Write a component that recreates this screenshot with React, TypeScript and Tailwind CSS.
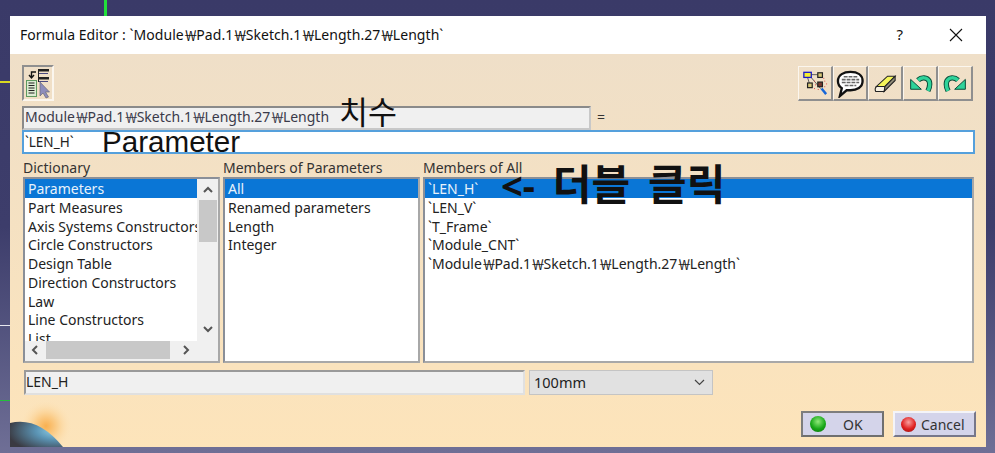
import React from "react";

const font = { fontFamily: '"Noto Sans","Noto Sans CJK KR",sans-serif' };

const dict = ["Parameters","Part Measures","Axis Systems Constructors","Circle Constructors","Design Table","Direction Constructors","Law","Line Constructors","List"];
const mem = ["All","Renamed parameters","Length","Integer"];
const all = ["`LEN_H`","`LEN_V`","`T_Frame`","`Module_CNT`"];

function W() {
  return <span className="tracking-[-1.5px]" style={{ fontFamily: '"Noto Sans CJK KR",sans-serif' }}>￦</span>;
}

function Path() {
  return <>Module<W />Pad.1<W />Sketch.1<W />Length.27<W />Length</>;
}

function Rows({ items, extra }: { items: string[]; extra?: React.ReactNode }) {
  return (
    <div className="flex flex-col">
      {items.map((t, i) => (
        <div key={t} className={`h-[18.75px] leading-[19px] pl-[3px] whitespace-nowrap ${i === 0 ? "bg-[#0a76d6] text-[#e8f2fb]" : "text-[#222]"}`}>{t}</div>
      ))}
      {extra}
    </div>
  );
}

function TB({ children }: { children: React.ReactNode }) {
  return (
    <div className="w-[35px] h-[35px] flex items-center justify-center border border-t-[#fbf6ee] border-l-[#fbf6ee] border-r-[#8f8f8f] border-b-[#8f8f8f] border-r-2 border-b-2">
      {children}
    </div>
  );
}

function Turn({ flip }: { flip?: boolean }) {
  return (
    <svg width="25" height="23" viewBox="0 0 30 28" fill="none" style={flip ? { transform: "scaleX(-1)" } : undefined}>
      <path d="M12 10C16 6 23 6 25.5 11C27 15 26 19 24 23" stroke="#0a4a38" strokeWidth="6.5" />
      <path d="M12 10C16 6 23 6 25.5 11C27 15 26 19 24 23" stroke="#2fd39a" strokeWidth="4.2" />
      <path d="M3 9L3 21L16 21Z" fill="#2fd39a" stroke="#0a4a38" strokeWidth="1.2" />
    </svg>
  );
}

export default function App() {
  return (
    <div className="relative w-[995px] h-[453px] overflow-hidden bg-gradient-to-b from-[#3a3a68] via-[#3d3d6b] to-[#6f6f96] pl-[10px] pt-[16px] text-[14px]" style={font}>
      <div className="absolute left-[104px] top-0 w-[3px] h-[16px] bg-[#22e03a]" />
      <div className="absolute left-0 top-[81px] w-[10px] h-[2px] bg-[#d8d820]" />
      <div className="absolute left-0 top-[325px] w-[10px] h-[1px] bg-[#e8e8f0]" />
      <div className="absolute left-0 top-[400px] w-[10px] h-[1px] bg-[#22c03a]" />
      <div className="w-[976px] h-[431px] flex flex-col">
        <div className="h-[38px] bg-white flex items-center pl-[10px] pr-[23px] pb-[1px] text-[14px] text-[#111] shrink-0">
          <span className="flex-1 whitespace-nowrap tracking-[0.05px]">Formula Editor : `<Path />`</span>
          <span className="mr-[46px] text-[15px]">?</span>
          <svg width="14" height="14" viewBox="0 0 14 14" stroke="#111" strokeWidth="1.1"><path d="M1 1l12 12M13 1L1 13" /></svg>
        </div>
        <div className="relative flex-1 flex flex-col bg-gradient-to-b from-[#efdfc8] to-[#fde4ba] pl-[12px] pr-[11px] text-[#222] overflow-hidden">
          <svg className="absolute left-0 bottom-0" width="70" height="45" viewBox="0 0 70 45">
            <defs>
              <radialGradient id="glow" cx="0.5" cy="0.5" r="0.5"><stop offset="0" stopColor="#f9b050" /><stop offset="0.45" stopColor="#fbd090" /><stop offset="1" stopColor="#fde4ba" stopOpacity="0" /></radialGradient>
              <radialGradient id="earth" cx="0.85" cy="0.35" r="0.9"><stop offset="0" stopColor="#8fcfe8" /><stop offset="0.4" stopColor="#5b94b4" /><stop offset="1" stopColor="#3a3a42" /></radialGradient>
            </defs>
            <circle cx="36" cy="24" r="26" fill="url(#glow)" />
            <path d="M0 21 Q28 14 53 45 L0 45Z" fill="url(#earth)" />
          </svg>

          <div className="flex justify-between items-start pt-[11px] h-[51px] shrink-0 pr-[2px]">
            <div className="w-[32px] h-[36px] flex items-center justify-center border-2 border-t-[#8f8f8f] border-l-[#8f8f8f] border-r-[#fbf6ee] border-b-[#fbf6ee]">
              <svg width="28" height="32" viewBox="0 0 28 32" fill="none">
                <path d="M12 5H7.5V10M5 8l2.5 3L10 8" stroke="#111" strokeWidth="1.4" />
                <rect x="2.5" y="13.5" width="10" height="16" fill="#dcebd2" stroke="#5f9a5f" />
                <path d="M4.5 16h6M4.5 18.5h6M4.5 21h6M4.5 23.5h6M4.5 26h6" stroke="#222" />
                <path d="M14.5 2v13" stroke="#222" />
                <rect x="15" y="2" width="10" height="2.5" fill="#222" />
                <rect x="15" y="10" width="10" height="2.5" fill="#222" />
                <path d="M15 6.5h9M15 14.5h9" stroke="#4a4a80" />
                <path d="M16 15v14l3-3 3 5 2.5-1-3-5h4z" fill="#8d8dbb" stroke="#6a6a7a" strokeWidth="0.7" />
              </svg>
            </div>
            <div className="flex ml-auto mt-[1px]">
              <TB>
                <svg width="26" height="26" viewBox="0 0 28 28" fill="none">
                  <path d="M9 5h8M6 8l3 10M9 7l11 13" stroke="#555" />
                  <rect x="2" y="2.5" width="8" height="5.5" fill="#f5ee30" stroke="#1a1ac8" strokeWidth="1.4" />
                  <rect x="17" y="3" width="5" height="5" fill="#d8c878" stroke="#222" strokeWidth="1.3" />
                  <rect x="6" y="14" width="5" height="5" fill="#d8c878" stroke="#222" strokeWidth="1.3" />
                  <rect x="17" y="13" width="5" height="5" fill="#7a3a30" stroke="#222" strokeWidth="1.3" />
                  <path d="M21 20l5 6" stroke="#1666d8" strokeWidth="2.6" />
                  <path d="M13 12h1M14 16h1M24 12h1M26 15h1M23 9h1M13 20h1M17 21h1M24 18h1" stroke="#e04040" />
                </svg>
              </TB>
              <TB>
                <svg width="29" height="29" viewBox="0 0 30 30" fill="none">
                  <path d="M15 3c7 0 12.500 3 12.500 9.500s-6 9.500-12.500 9.500c-1.500 0-3 0-4 0l-7 6 2-8c-3-2-4-4.500-4-7.500C2 6 8 3 15 3z" fill="#fff" stroke="#111" strokeWidth="2.4" />
                  <path d="M8 8h14M6 11h18M6 14h18M9 17h12" stroke="#666" strokeWidth="1.6" strokeDasharray="4 1" />
                </svg>
              </TB>
              <TB>
                <svg width="24" height="22" viewBox="0 0 28 26" fill="none">
                  <path d="M4 17L17 5h9L14 17z" fill="#f6f65a" stroke="#222" strokeWidth="1.2" />
                  <path d="M4 17c-2 2-2 4-1 6h10l1-6z" fill="#f7f0e0" stroke="#222" strokeWidth="1.2" />
                  <path d="M14 17l12-12v5L13 23z" fill="#8f8a78" stroke="#222" strokeWidth="1.2" />
                </svg>
              </TB>
              <TB><Turn /></TB>
              <TB><Turn flip /></TB>
            </div>
          </div>

          <div className="flex items-center h-[25px] shrink-0">
            <div className="w-[569px] h-[24px] bg-[#f0f0f0] border-2 border-t-[#8a8a8a] border-l-[#8a8a8a] border-r-[#c8c8c8] border-b-[#c8c8c8] pl-[1px] leading-[17px] text-[#3a3a4a] whitespace-nowrap"><Path /></div>
            <span className="ml-[6px] text-[#333] -mt-[3px]">=</span>
          </div>
          <div className="w-[953px] h-[24px] bg-white border-2 border-[#55a0dc] pl-[1px] leading-[20px] text-[13.5px] shrink-0">`LEN_H`</div>

          <div className="grid grid-cols-[197px_197px_551px] gap-x-[3px] ml-[1px] mt-[4px] shrink-0 text-[#333]">
            <div className="h-[19px] leading-[19px]">Dictionary</div>
            <div className="h-[19px] leading-[19px]">Members of Parameters</div>
            <div className="h-[19px] leading-[19px]">Members of All</div>

            <div className="h-[186px] bg-white border-2 border-t-[#8a8f98] border-l-[#8a8f98] border-r-[#a8a8a8] border-b-[#a8a8a8] flex flex-col overflow-hidden">
              <div className="flex h-[162px] shrink-0">
                <div className="w-[172px] overflow-hidden"><Rows items={dict} /></div>
                <div className="w-[21px] bg-[#f0f0f0] flex flex-col items-center shrink-0">
                  <svg className="mt-[7px]" width="10" height="8" viewBox="0 0 10 8" fill="none" stroke="#555" strokeWidth="2"><path d="M1 6l4-4 4 4" /></svg>
                  <div className="w-[18px] h-[42px] bg-[#c8c8c8] mt-[6px]" />
                  <svg className="mt-auto mb-[8px]" width="10" height="8" viewBox="0 0 10 8" fill="none" stroke="#555" strokeWidth="2"><path d="M1 2l4 4 4-4" /></svg>
                </div>
              </div>
              <div className="flex-1 bg-[#f0f0f0] flex items-start">
                <svg className="ml-[6px] mt-[4px]" width="8" height="10" viewBox="0 0 8 10" fill="none" stroke="#555" strokeWidth="2"><path d="M6 1L2 5l4 4" /></svg>
                <div className="w-[124px] h-[18px] bg-[#c8c8c8] ml-[7px]" />
                <svg className="ml-[12px] mt-[4px]" width="8" height="10" viewBox="0 0 8 10" fill="none" stroke="#555" strokeWidth="2"><path d="M2 1l4 4-4 4" /></svg>
              </div>
            </div>
            <div className="h-[186px] bg-white border-2 border-t-[#8a8f98] border-l-[#8a8f98] border-r-[#a8a8a8] border-b-[#a8a8a8]"><Rows items={mem} /></div>
            <div className="h-[186px] bg-white border-2 border-t-[#8a8f98] border-l-[#8a8f98] border-r-[#a8a8a8] border-b-[#a8a8a8]">
              <Rows items={all} extra={<div className="h-[18.75px] leading-[19px] pl-[3px] whitespace-nowrap text-[#222]">`<Path />`</div>} />
            </div>
          </div>

          <div className="flex gap-[4px] ml-[2px] mt-[7px] shrink-0">
            <div className="w-[501px] h-[25px] bg-[#f0f0f0] border-2 border-t-[#9a9a9a] border-l-[#9a9a9a] border-r-[#e0e0e0] border-b-[#e0e0e0] leading-[19px]">LEN_H</div>
            <div className="w-[184px] h-[25px] bg-[#e1e1e1] border border-[#c4c4c4] pl-[4px] pr-[7px] flex items-center justify-between text-[#222] text-[14.5px]">
              <span>100mm</span>
              <svg width="11" height="7" viewBox="0 0 11 7" fill="none" stroke="#444" strokeWidth="1.2"><path d="M1 1l4.500 4.500L10 1" /></svg>
            </div>
          </div>

          <div className="relative flex justify-end gap-[9px] mt-[16px] shrink-0 -mr-[1px]">
            <div className="w-[83px] h-[26px] bg-[#d4d4ea] border-2 border-t-[#7d7d7d] border-l-[#7d7d7d] border-r-[#6f6f6f] border-b-[#6f6f6f] flex items-center pl-[7px]">
              <span className="w-[16px] h-[16px] rounded-full bg-[radial-gradient(circle_at_50%_35%,#8fe87a,#18a818_55%,#0a6a0a)]" />
              <span className="ml-[17px] text-[#333]">OK</span>
            </div>
            <div className="w-[83px] h-[26px] bg-[#d4d4ea] border-2 border-t-[#f4f4f8] border-l-[#f4f4f8] border-r-[#77778a] border-b-[#77778a] flex items-center pl-[6px]">
              <span className="w-[15px] h-[15px] rounded-full bg-[radial-gradient(circle_at_50%_35%,#f8a0a0,#e02020_55%,#8a1010)]" />
              <span className="ml-[5px] text-[#333]">Cancel</span>
            </div>
          </div>
        </div>
      </div>

      <div className="absolute left-[339px] top-[95px] text-[31.5px] leading-[34px] text-[#111]">치수</div>
      <div className="absolute left-[102px] top-[125px] text-[29.6px] leading-[34px] text-[#111]" style={{ fontFamily: '"Liberation Sans",sans-serif' }}>Parameter</div>
      <div className="absolute left-[501px] top-[164px] leading-[40px] font-bold text-[#111] whitespace-pre text-[42px] [word-spacing:7px]"><span className="text-[38px]">{"<-"}</span>{" 더블 클릭"}</div>
    </div>
  );
}
